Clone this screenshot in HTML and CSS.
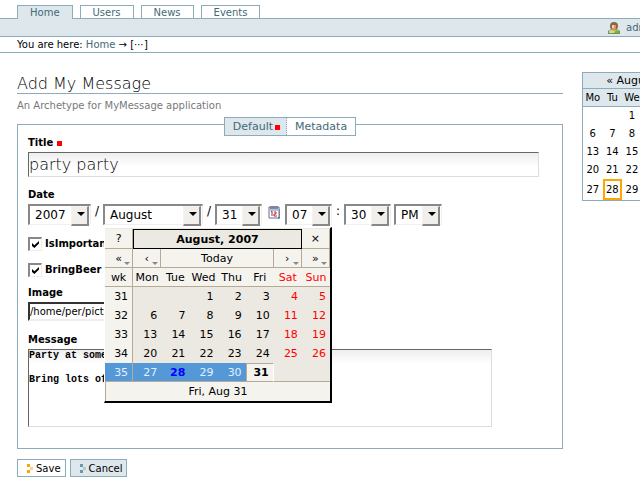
FILE: index.html
```html
<!DOCTYPE html>
<html lang="en">
<head>
    <meta charset="UTF-8">
    <meta name="viewport" content="width=device-width, initial-scale=1.0">
    <title>Add My Message</title>
    <link rel="stylesheet" href="styles.css">
</head>
<body>
    <nav class="globalnav">
        <a href="#" class="selected">Home</a>
        <a href="#">Users</a>
        <a href="#">News</a>
        <a href="#">Events</a>
    </nav>

    <div class="personaltools">
        <svg class="user-icon" width="12" height="12" viewBox="0 0 12 12">
            <path d="M0 12V9l3-2h6l3 2v3z" fill="#7c8c5c"/>
            <path d="M1 11V9l3-2h4l3 2v2z" fill="#c4dc98"/>
            <path d="M6 11l2-3 3 1v2z" fill="#6cbc24"/>
            <circle cx="6" cy="4" r="4" fill="#86684a"/>
            <path d="M4 3h4v3l-1 3H5L4 6z" fill="#e89450"/>
            <path d="M4 3h2v3H4z" fill="#f8d4b4"/>
        </svg>
        <a href="#">admin</a>
    </div>

    <div class="breadcrumbs">
        You are here: <a href="#">Home</a> → <span>[⋯]</span>
    </div>

    <div class="columns">
        <main>
            <h1>Add My Message</h1>
            <p class="description">An Archetype for MyMessage application</p>

            <form>
                <nav class="formtabs">
                    <a href="#" class="selected">Default<i class="required"></i></a>
                    <a href="#">Metadata</a>
                </nav>

                <div class="panel">
                    <div class="field">
                        <label for="title">Title<i class="required"></i></label>
                        <input type="text" id="title" class="title-input" value="party party">
                    </div>

                    <div class="field date-field">
                        <label for="year">Date</label>
                        <div class="date-row">
                            <span class="select year"><select id="year"><option>2007</option></select></span>
                            <span class="sep">/</span>
                            <span class="select month"><select aria-label="Month"><option>August</option></select></span>
                            <span class="sep">/</span>
                            <span class="select"><select aria-label="Day"><option>31</option></select></span>
                            <button type="button" class="pick" aria-label="Pick a date">
                                <svg width="12" height="13" viewBox="0 0 12 13">
                                    <path d="M1 1h10v11H1z" fill="#fff" stroke="#5670a0"/>
                                    <path d="M2 2h8v3H2z" fill="#a8c4e4"/>
                                    <path d="M3 0v3M5 0v3M7 0v3M9 0v3" stroke="#505868"/>
                                    <path d="M3 6l1-1v5M6 6h2v2H6v2h3" fill="none" stroke="#d02020"/>
                                    <path d="M10 12h2V3" fill="none" stroke="#485878"/>
                                </svg>
                            </button>
                            <span class="select"><select aria-label="Hour"><option>07</option></select></span>
                            <span class="sep">:</span>
                            <span class="select"><select aria-label="Minute"><option>30</option></select></span>
                            <span class="select ampm"><select aria-label="AM or PM"><option>PM</option></select></span>
                        </div>

                        <div class="popup">
                            <table>
                                <thead>
                                    <tr class="head">
                                        <td class="btn">?</td>
                                        <td colspan="6" class="month-title">August, 2007</td>
                                        <td class="btn">×</td>
                                    </tr>
                                    <tr class="nav">
                                        <td class="btn more">«</td>
                                        <td class="btn more">‹</td>
                                        <td class="btn" colspan="4">Today</td>
                                        <td class="btn more">›</td>
                                        <td class="btn more">»</td>
                                    </tr>
                                    <tr class="daynames">
                                        <th class="wk">wk</th><th>Mon</th><th>Tue</th><th>Wed</th><th>Thu</th><th>Fri</th><th class="weekend">Sat</th><th class="weekend">Sun</th>
                                    </tr>
                                </thead>
                                <tbody>
                                    <tr><td class="wk">31</td><td></td><td></td><td>1</td><td>2</td><td>3</td><td class="weekend">4</td><td class="weekend">5</td></tr>
                                    <tr><td class="wk">32</td><td>6</td><td>7</td><td>8</td><td>9</td><td>10</td><td class="weekend">11</td><td class="weekend">12</td></tr>
                                    <tr><td class="wk">33</td><td>13</td><td>14</td><td>15</td><td>16</td><td>17</td><td class="weekend">18</td><td class="weekend">19</td></tr>
                                    <tr><td class="wk">34</td><td>20</td><td>21</td><td>22</td><td>23</td><td>24</td><td class="weekend">25</td><td class="weekend">26</td></tr>
                                    <tr class="current"><td class="wk">35</td><td>27</td><td class="today">28</td><td>29</td><td>30</td><td class="picked">31</td><td class="empty"></td><td class="empty"></td></tr>
                                </tbody>
                                <tfoot>
                                    <tr><td colspan="8">Fri, Aug 31</td></tr>
                                </tfoot>
                            </table>
                        </div>
                    </div>

                    <div class="checks">
                        <div class="check">
                            <input type="checkbox" id="important" checked>
                            <label for="important">IsImportant</label>
                        </div>
                        <div class="check">
                            <input type="checkbox" id="beer" checked>
                            <label for="beer">BringBeer</label>
                        </div>
                    </div>

                    <div class="field image-field">
                        <label for="image">Image</label>
                        <input type="text" id="image" class="file-input" value="/home/per/pictures/party.png">
                    </div>

                    <div class="field">
                        <label for="message">Message</label>
                        <textarea id="message">Party at some place

Bring lots of beer</textarea>
                    </div>
                </div>

                <div class="controls">
                    <button type="submit" class="save"><svg width="6" height="9" viewBox="0 0 6 9"><path d="M0 0h3v3H0zM0 6h3v3H0z" fill="#ffa500"/><path d="M3 3h3v3H3z" fill="#ffd28a"/></svg>Save</button>
                    <button type="button" class="cancel"><svg width="6" height="9" viewBox="0 0 6 9"><path d="M0 0h3v3H0zM0 6h3v3H0z" fill="#6c98a8"/><path d="M3 3h3v3H3z" fill="#b4c8d2"/></svg>Cancel</button>
                </div>
            </form>
        </main>

        <aside>
            <table class="portlet">
                <thead>
                    <tr><th colspan="7">« August 2007 »</th></tr>
                    <tr><th>Mo</th><th>Tu</th><th>We</th><th>Th</th><th>Fr</th><th>Sa</th><th>Su</th></tr>
                </thead>
                <tbody>
                    <tr><td></td><td></td><td>1</td><td>2</td><td>3</td><td>4</td><td>5</td></tr>
                    <tr><td>6</td><td>7</td><td>8</td><td>9</td><td>10</td><td>11</td><td>12</td></tr>
                    <tr><td>13</td><td>14</td><td>15</td><td>16</td><td>17</td><td>18</td><td>19</td></tr>
                    <tr><td>20</td><td>21</td><td>22</td><td>23</td><td>24</td><td>25</td><td>26</td></tr>
                    <tr><td>27</td><td class="today">28</td><td>29</td><td>30</td><td>31</td><td></td><td></td></tr>
                </tbody>
            </table>
        </aside>
    </div>
</body>
</html>
```
FILE: styles.css
```css
* { box-sizing: border-box; }
body {
    margin: 0;
    padding-top: 5px;
    background: #fff;
    color: #000;
    font: 10px/14px "DejaVu Sans", Verdana, sans-serif;
    overflow-x: hidden;
}
a { color: #436976; text-decoration: none; }
input, select, textarea, button { margin: 0; color: #000; font-family: inherit; border-radius: 0; }

/* top */
.globalnav { display: flex; gap: 7px; padding-left: 17px; }
.globalnav a {
    height: 13px;
    padding: 0 12px;
    border: 1px solid #8cacbb;
    border-bottom: 0;
}
.globalnav .selected { height: 14px; margin-bottom: -1px; background: #dee7ec; position: relative; }
.personaltools {
    display: flex;
    justify-content: flex-end;
    align-items: center;
    gap: 6px;
    height: 19px;
    border: 1px solid #8cacbb;
    border-width: 1px 0;
    background: #dee7ec;
}
.personaltools a { width: 14px; overflow: hidden; }
.breadcrumbs {
    height: 16px;
    padding: 1px 17px 0;
    border-bottom: 1px solid #8cacbb;
}

.columns {
    display: grid;
    grid-template-columns: minmax(0, 1fr) 58px;
    gap: 19px;
    padding: 19px 0 0 17px;
}

h1 {
    margin: 0;
    padding-top: 3px;
    border-bottom: 1px solid #8cacbb;
    font-family: "DejaVu Sans Light", "DejaVu Sans", Verdana, sans-serif;
    font-size: 16px;
    font-weight: 200;
    line-height: 18px;
}
.description { margin: 5px 0 4px; color: #76797c; }

/* form */
.formtabs {
    display: flex;
    width: fit-content;
    height: 19px;
    margin: 0 auto -12px;
    border: 1px solid #8cacbb;
    background: #fff;
    font-size: 11px;
    line-height: 17px;
    position: relative;
}
.formtabs a { padding: 0 8px; }
.formtabs .selected { padding-right: 6px; background: #dee7ec; border-right: 1px dotted #8cacbb; }
.required { display: inline-block; width: 5px; height: 5px; margin-left: 4px; background: #f00; }
.formtabs .required { margin-left: 2px; }
.panel { padding: 11px 23px 21px 10px; border: 1px solid #8cacbb; }
.field { margin-bottom: 11px; }
.field:last-child { margin-bottom: 0; }
.field label { display: block; height: 16px; font-weight: bold; }
.title-input {
    display: block;
    width: 100%;
    height: 25px;
    padding: 0;
    border: 1px solid #ddd;
    border-top-color: #666;
    border-left-color: #666;
    background: linear-gradient(#eee, #fff 14px);
    font-family: "DejaVu Sans Light", "DejaVu Sans", Verdana, sans-serif;
    font-size: 16px;
    font-weight: 200;
}
.date-field { position: relative; margin-bottom: 12px; }
.date-row { display: flex; align-items: flex-start; height: 21px; font-size: 12px; }
.sep { width: 12px; text-align: center; }
.select { position: relative; width: 47px; height: 21px; }
.select.year { width: 63px; }
.select.month { width: 100px; }
.select.ampm { width: 48px; margin-left: 3px; }
.select select {
    appearance: none;
    width: 100%;
    height: 21px;
    padding: 0 0 0 5px;
    border: 2px solid #888;
    border-right-color: #f0f0f0;
    border-bottom-color: #f0f0f0;
    border-right-width: 1px;
    border-bottom-width: 1px;
    background: #fff;
    font-size: 12px;
}
.select::before {
    content: "";
    position: absolute;
    right: 2px;
    top: 2px;
    width: 15px;
    height: 17px;
    border: 1px solid #f4f3ee;
    border-right: 2px solid #888;
    border-bottom: 2px solid #888;
    background: #f0efeb;
    pointer-events: none;
}
.select::after {
    content: "";
    position: absolute;
    right: 6px;
    top: 8px;
    border: 4px solid transparent;
    border-top-color: #000;
    border-bottom: 0;
    pointer-events: none;
}
.pick { width: 23px; padding: 2px 0 0 0; border: 0; background: none; line-height: 0; }

.checks { display: flex; flex-direction: column; gap: 12px; margin-bottom: 9px; }
.check { display: flex; align-items: center; gap: 3px; height: 14px; font-weight: bold; }
.check input {
    appearance: none;
    width: 14px;
    height: 14px;
    border: 2px solid #888;
    border-right: 1px solid #eee;
    border-bottom: 1px solid #eee;
}
.check input:checked::before {
    content: "";
    display: block;
    width: 7px;
    height: 7px;
    margin: 2px;
    background: #000;
    clip-path: polygon(0 30%, 35% 60%, 100% 0, 100% 35%, 35% 100%, 0 70%);
}
.image-field { margin-bottom: 12px; }
.file-input {
    display: block;
    width: 220px;
    height: 19px;
    padding: 0;
    border: 2px solid #333;
    border-right-color: #eee;
    border-bottom-color: #eee;
    font-size: 10px;
}
textarea {
    display: block;
    width: 464px;
    max-width: 100%;
    height: 78px;
    padding: 0;
    border: 1px solid #ddd;
    border-top-color: #666;
    border-left-color: #666;
    background: linear-gradient(#eee, #fff 14px);
    font: bold 10px/12px "Liberation Mono", "Courier New", monospace;
    resize: none;
}
.controls { display: flex; gap: 4px; margin-top: 10px; }
.controls button {
    display: flex;
    align-items: center;
    gap: 3px;
    height: 18px;
    padding: 0 4px 0 9px;
    border: 1px solid #8cacbb;
    background: #fff;
    font-size: 10px;
}
.controls .cancel { background: #dee7ec; }

/* date popup */
.popup {
    position: absolute;
    left: 76px;
    top: 39px;
    z-index: 2;
    width: 228px;
    padding-top: 1px;
    border: 1px solid #fff;
    border-right: 2px solid #000;
    border-bottom: 2px solid #000;
    background: #ece9e2;
}
.popup table { width: 100%; table-layout: fixed; border-collapse: separate; border-spacing: 0; font-size: 11px; line-height: 17px; }
.popup td { height: 19px; padding: 0 4px 0 0; text-align: right; }
.popup th { height: 19px; padding: 0; font-weight: normal; background: #f4f3ee; border-bottom: 1px solid #b7a994; }
.popup .btn { padding: 0; text-align: center; background: #f4f3ee; border: 1px solid #b7a994; border-width: 0 1px 1px 0; }
.popup .head td { height: 20px; }
.popup .month-title { padding: 0; text-align: center; font-weight: bold; border: 1px solid #000; }
.popup .more { position: relative; }
.popup .more::after {
    content: "";
    position: absolute;
    right: 2px;
    bottom: 2px;
    border: 3px solid transparent;
    border-top-color: #888;
    border-bottom: 0;
}
.popup .wk { background: #f4f3ee; border-right: 1px solid #b7a994; }
.popup .weekend { color: #f00; }
.popup .current td { background: #5498d8; color: #e4f0fc; border-bottom: 1px solid #b7a994; }
.popup .current .today { color: #00f; font-weight: bold; }
.popup .current .picked { background: #f4f3ee; color: #000; font-weight: bold; border: 1px solid #b7a994; border-right-color: #fff; }
.popup .current .empty { background: #ece9e2; }
.popup tfoot td { padding: 0; text-align: center; background: #f4f3ee; border-left: 1px solid #b7a994; }

/* calendar portlet */
aside { overflow: hidden; }
.portlet { width: 139px; table-layout: fixed; border: 1px solid #8cacbb; border-spacing: 0; text-align: center; }
.portlet th { height: 18px; padding: 0; font-weight: normal; background: #dee7ec; border-bottom: 1px solid #8cacbb; }
.portlet tr:first-child th { height: 16px; font-size: 11px; }
.portlet td { height: 18px; padding: 0; }
.portlet tr:last-child th { font-size: 10px; }
.portlet tr:last-child td { height: 21px; }
.portlet .today { border: 2px solid #ffa500; }
```
